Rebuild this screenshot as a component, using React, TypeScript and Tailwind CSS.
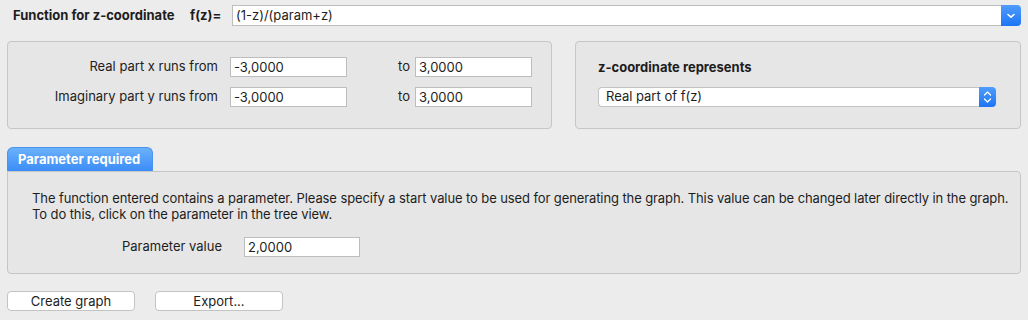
import React from "react";

const font = { fontFamily: "Inter, 'Noto Sans', 'Liberation Sans', sans-serif" };

function TextBox({ value, w }: { value: string; w: string }) {
  return (
    <div
      className={`${w} h-[20px] bg-white border border-[#bdbdbd] flex items-center pl-[3px] text-[13px] text-[#1d1d1d] leading-none`}
    >
      {value}
    </div>
  );
}

function Chevron() {
  return (
    <svg width="10" height="6" viewBox="0 0 10 6">
      <path d="M2 1.5 L5 4.2 L8 1.5" stroke="white" strokeWidth="1.6" fill="none" strokeLinecap="round" strokeLinejoin="round" />
    </svg>
  );
}

function UpDown() {
  return (
    <svg width="9" height="14" viewBox="0 0 9 14">
      <path d="M1.5 5 L4.5 2 L7.5 5" stroke="white" strokeWidth="1.3" fill="none" strokeLinecap="round" strokeLinejoin="round" />
      <path d="M1.5 9 L4.5 12 L7.5 9" stroke="white" strokeWidth="1.3" fill="none" strokeLinecap="round" strokeLinejoin="round" />
    </svg>
  );
}

export default function App() {
  return (
    <div
      className="w-[1028px] h-[320px] bg-[#ececec] px-[7px] pt-[5px] text-[13px] text-[#1d1d1d] overflow-hidden"
      style={font}
    >
      {/* Row 1 */}
      <div className="flex items-center h-[21px]">
        <div className="pl-[6px] w-[183px] font-bold text-[13px]">Function for z-coordinate</div>
        <div className="w-[41px] font-bold">f(z)=</div>
        <div className="flex-1 h-[21px] flex ml-px">
          <div className="flex-1 bg-white border border-[#bdbdbd] border-r-0 flex items-center pl-[3px]">
            (1-z)/(param+z)
          </div>
          <div className="w-[20px] h-[21px] rounded-r-[4px] bg-gradient-to-b from-[#4f9cfb] to-[#1c74f5] flex items-center justify-center">
            <Chevron />
          </div>
        </div>
      </div>

      {/* Row 2 */}
      <div className="flex mt-[15px] h-[88px] gap-[23px]">
        <div className="w-[545px] border border-[#c6c6c6] rounded-[4px] bg-[#e6e6e6] pt-[15px] flex flex-col gap-[10px]">
          <div className="flex items-center">
            <div className="w-[210px] text-right">Real part x runs from</div>
            <div className="ml-[12px]"><TextBox value="-3,0000" w="w-[117px]" /></div>
            <div className="w-[63px] text-right">to</div>
            <div className="ml-[5px]"><TextBox value="3,0000" w="w-[117px]" /></div>
          </div>
          <div className="flex items-center">
            <div className="w-[210px] text-right">Imaginary part y runs from</div>
            <div className="ml-[12px]"><TextBox value="-3,0000" w="w-[117px]" /></div>
            <div className="w-[63px] text-right">to</div>
            <div className="ml-[5px]"><TextBox value="3,0000" w="w-[117px]" /></div>
          </div>
        </div>
        <div className="flex-1 border border-[#c6c6c6] rounded-[4px] bg-[#e6e6e6] pl-[22px] pt-[16px]">
          <div className="font-bold h-[18px] leading-[18px]">z-coordinate represents</div>
          <div className="mt-[11px] flex h-[20px] w-[398px]">
            <div className="flex-1 bg-white border border-[#c3c3c3] border-r-0 rounded-l-[4px] flex items-center pl-[7px]">
              Real part of f(z)
            </div>
            <div className="w-[17px] rounded-r-[4px] bg-gradient-to-b from-[#4f9cfb] to-[#1c74f5] flex items-center justify-center">
              <UpDown />
            </div>
          </div>
        </div>
      </div>

      {/* Row 3 */}
      <div className="mt-[18px]">
        <div className="w-[146px] h-[24px] rounded-t-[6px] bg-gradient-to-b from-[#6bb0fb] to-[#3a8cf7] text-white font-bold flex items-center pl-[10px] border border-[#4a94f0] border-b-0">
          Parameter required
        </div>
        <div className="h-[103px] border border-[#c6c6c6] rounded-b-[4px] rounded-tr-[4px] bg-[#e6e6e6] pl-[24px] pt-[18px]">
          <div className="leading-[16px] whitespace-nowrap tracking-[-0.1px]">
            The function entered contains a parameter. Please specify a start value to be used for generating the graph. This value can be changed later directly in the graph.
            <br />
            To do this, click on the parameter in the tree view.
          </div>
          <div className="flex items-center mt-[15px]">
            <div className="w-[212px] pl-[90px]">Parameter value</div>
            <TextBox value="2,0000" w="w-[116px]" />
          </div>
        </div>
      </div>

      {/* Row 4 */}
      <div className="flex mt-[17px] gap-[20px]">
        <button className="w-[128px] h-[20px] bg-white border border-[#c3c3c3] rounded-[4px] text-[13px] leading-none flex items-center justify-center">
          Create graph
        </button>
        <button className="w-[128px] h-[20px] bg-white border border-[#c3c3c3] rounded-[4px] text-[13px] leading-none flex items-center justify-center">
          Export...
        </button>
      </div>
    </div>
  );
}
